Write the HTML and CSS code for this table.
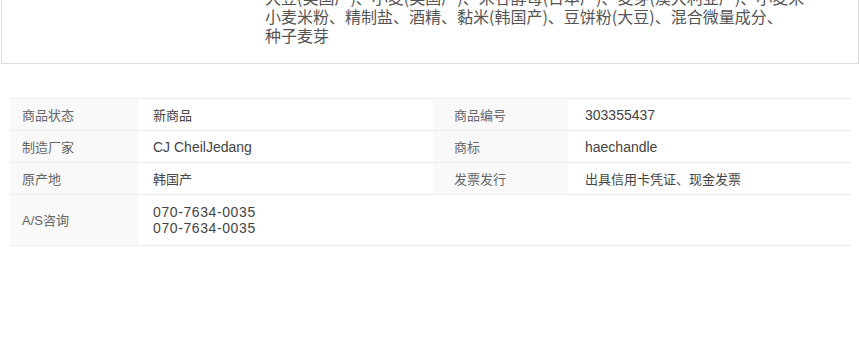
FILE: index.html
```html
<!DOCTYPE html>
<html lang="zh">
<head>
<meta charset="utf-8">
<title>商品信息</title>
<link rel="stylesheet" href="styles.css">
</head>
<body>
<section class="desc-box">
  <div class="desc-text">大豆(美国产)、小麦(美国产)、米谷酵母(日本产)、麦芽(澳大利亚产)、小麦米<br>小麦米粉、精制盐、酒精、黏米(韩国产)、豆饼粉(大豆)、混合微量成分、<br>种子麦芽</div>
</section>
<table class="info">
  <tbody>
    <tr>
      <th class="th1">商品状态</th>
      <td class="td1">新商品</td>
      <th class="th2">商品编号</th>
      <td class="td2"><span class="lat">303355437</span></td>
    </tr>
    <tr>
      <th class="th1">制造厂家</th>
      <td class="td1"><span class="lat">CJ CheilJedang</span></td>
      <th class="th2">商标</th>
      <td class="td2"><span class="lat">haechandle</span></td>
    </tr>
    <tr>
      <th class="th1">原产地</th>
      <td class="td1">韩国产</td>
      <th class="th2">发票发行</th>
      <td class="td2">出具信用卡凭证、现金发票</td>
    </tr>
    <tr class="tall">
      <th class="th1"><span class="lat-s">A/S</span>咨询</th>
      <td class="td1"><span class="phone">070-7634-0035</span><br><span class="phone">070-7634-0035</span></td>
      <td class="empty"></td>
      <td class="empty"></td>
    </tr>
  </tbody>
</table>
</body>
</html>
```

FILE: styles.css
```css
html, body {
  margin: 0;
  padding: 0;
  background: #fff;
}
body {
  width: 860px;
  height: 340px;
  overflow: hidden;
  font-family: "Liberation Sans", "Noto Sans CJK SC", sans-serif;
}
.desc-box {
  margin: -12px 0 0 1px;
  width: 858px;
  box-sizing: border-box;
  border: 1px solid #dcdcdc;
  border-top: none;
  padding: 0 0 18px 263px;
}
.desc-text {
  font-family: "Noto Sans CJK SC", sans-serif;
  font-size: 16px;
  line-height: 19px;
  color: #555;
  white-space: nowrap;
}
.info {
  margin: 34px 0 0 10px;
  width: 842px;
  border-collapse: collapse;
  table-layout: fixed;
  font-family: "Noto Sans CJK SC", sans-serif;
  font-size: 13px;
}
.info tr {
  border-top: 1px solid #ececec;
  border-bottom: 1px solid #ececec;
}
.info th, .info td {
  height: 32px;
  padding: 0;
  text-align: left;
  vertical-align: middle;
  font-weight: normal;
  line-height: 16px;
}
.info th {
  background: #f9f9f9;
  color: #666;
}
.info td {
  color: #444;
}
.th1 { width: 128px; padding-left: 12px !important; box-sizing: border-box; }
.td1 { width: 295px; padding-left: 15px !important; box-sizing: border-box; }
.th2 { width: 135px; padding-left: 21px !important; box-sizing: border-box; }
.td2 { width: 284px; padding-left: 17px !important; box-sizing: border-box; }
.info td.empty { background: #fff; }
.tall th, .tall td { height: 50px; }
.lat {
  font-family: "Liberation Sans", sans-serif;
  font-size: 14px;
}
.lat-s {
  font-family: "Liberation Sans", sans-serif;
  font-size: 13px;
}
.phone {
  font-family: "Liberation Sans", sans-serif;
  font-size: 14px;
  letter-spacing: 0.6px;
}
```
